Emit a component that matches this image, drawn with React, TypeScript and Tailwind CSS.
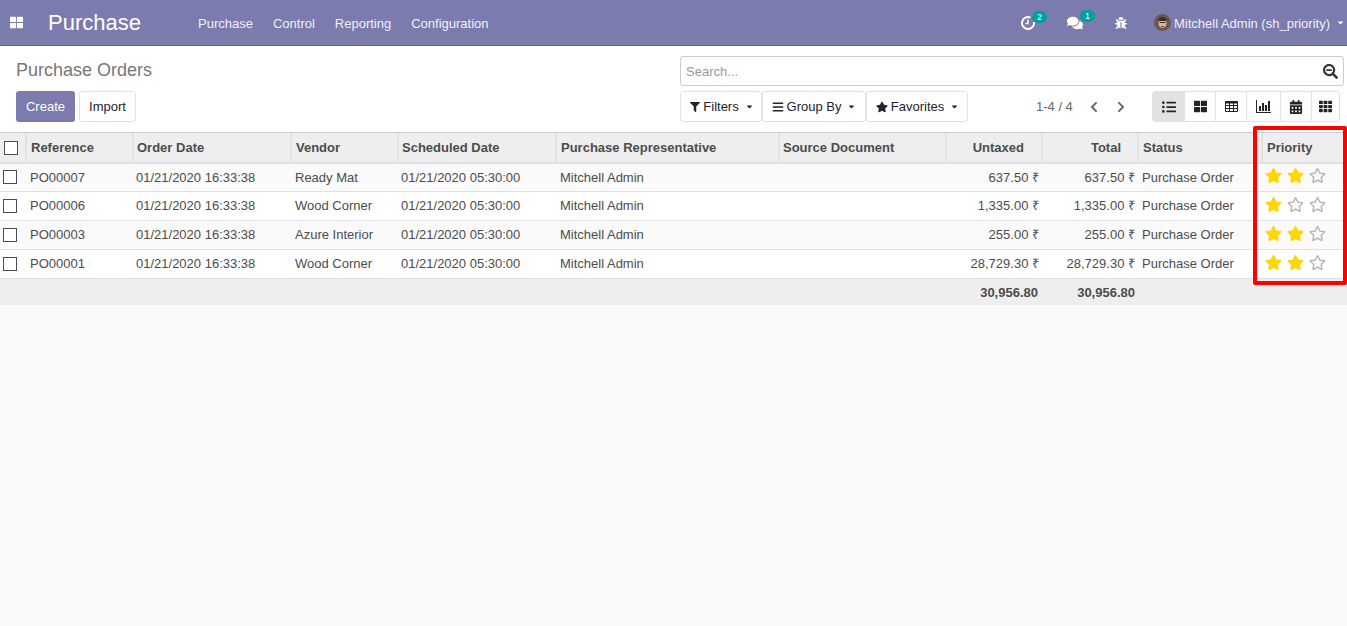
import { FaThLarge, FaComments, FaBug, FaFilter, FaBars, FaStar, FaRegStar, FaSearchMinus, FaListUl, FaTh, FaCalendarAlt, FaChevronLeft, FaChevronRight, FaCaretDown } from 'react-icons/fa';

const rows = [
    { ref: 'PO00007', vendor: 'Ready Mat', amount: '637.50', stars: 2 },
    { ref: 'PO00006', vendor: 'Wood Corner', amount: '1,335.00', stars: 1 },
    { ref: 'PO00003', vendor: 'Azure Interior', amount: '255.00', stars: 2 },
    { ref: 'PO00001', vendor: 'Wood Corner', amount: '28,729.30', stars: 2 },
];

const Clock = () => (
    <svg width="14" height="14" viewBox="0 0 14 14" fill="none" stroke="white" strokeWidth="2">
        <path d="M9.5 1.6A6 6 0 1 0 12.9 6" />
        <path d="M7 3.6V7.6H4.4" strokeWidth="1.5" />
    </svg>
);

const Chart = () => (
    <svg width="15" height="13" viewBox="0 0 15 13" fill="#222">
        <path d="M0 0h1v12h14v1H0z" />
        <rect x="3" y="6" width="2" height="5" />
        <rect x="6" y="3" width="2" height="8" />
        <rect x="9" y="5" width="2" height="6" />
        <rect x="12" y="1" width="2" height="10" />
    </svg>
);

const TableIcon = () => (
    <svg width="13" height="11" viewBox="0 0 13 11" fill="none" stroke="#222">
        <path d="M.5 .5h12v10H.5z" />
        <path d="M.5 1.5h12" strokeWidth="2" />
        <path d="M.5 4.5h12M.5 7.5h12M4.5 .5v10M8.5 .5v10" />
    </svg>
);

const Avatar = () => (
    <svg width="17" height="17" viewBox="0 0 17 17" className="rounded-full">
        <rect width="17" height="17" fill="#6b5a4a" />
        <ellipse cx="8.5" cy="9" rx="4" ry="5" fill="#d9b8a5" />
        <path d="M4 6c1-4 8-4 9 0l-1 1H5z" fill="#3d3028" />
        <rect x="5.5" y="8" width="6" height="1" fill="#333" />
        <path d="M7 12h3v1H7z" fill="#a33" />
    </svg>
);

const Stars = ({ n }: { n: number }) => (
    <div className="flex gap-[5px]">
        {[0, 1, 2].map((i) =>
            i < n ? (
                <FaStar key={i} size={17} className="text-[#ffd700]" />
            ) : (
                <FaRegStar key={i} size={17} className="text-[#b5b5b5]" />
            )
        )}
    </div>
);

const Checkbox = () => <div className="w-[14px] h-[14px] border border-[#4c4c4c] bg-white" />;

function App() {
    return (
        <div className="h-[626px] overflow-hidden bg-[#f9f9f9] text-[13px] text-[#4c4c4c] font-['Liberation_Sans',sans-serif] relative">
            <nav className="h-[46px] bg-[#7c7bad] border-b border-[#5f5e97] flex items-center text-white">
                <FaThLarge size={13} className="ml-[10px]" />
                <span className="ml-[25px] text-[22px] w-[150px]">Purchase</span>
                <div className="flex gap-5 text-[#f0f0f6] pt-[2px]">
                    <span>Purchase</span>
                    <span>Control</span>
                    <span>Reporting</span>
                    <span>Configuration</span>
                </div>
                <div className="ml-auto flex items-center">
                    <div className="flex items-center relative mr-[32px]">
                        <Clock />
                        <span className="absolute left-[11px] -top-[5px] w-[15px] h-[12px] rounded-full bg-[#00a09d] text-[9px] leading-[12px] text-center">2</span>
                    </div>
                    <div className="flex items-center relative mr-[32px]">
                        <FaComments size={16} />
                        <span className="absolute left-[13px] -top-[5px] w-[15px] h-[12px] rounded-full bg-[#00a09d] text-[9px] leading-[12px] text-center">1</span>
                    </div>
                    <FaBug size={12} className="mr-[27px]" />
                    <Avatar />
                    <span className="ml-[3px] text-[#f0f0f6] pt-[2px]">Mitchell Admin (sh_priority)</span>
                    <FaCaretDown size={9} className="ml-[6px] mr-[2px]" />
                </div>
            </nav>

            <div className="h-[87px] bg-white border-b border-[#cccccc] flex justify-between pl-[16px] pr-[3px]">
                <div>
                    <h1 className="mt-[13px] text-[18px] leading-[22px] text-[#777777]">Purchase Orders</h1>
                    <div className="mt-[10px] flex gap-[4px]">
                        <button className="w-[59px] h-[31px] bg-[#7c7bad] rounded-[3px] text-white">Create</button>
                        <button className="w-[57px] h-[31px] bg-white border border-[#dee2e6] rounded-[3px] text-[#212529]">Import</button>
                    </div>
                </div>
                <div className="w-[664px] pt-[10px]">
                    <div className="h-[30px] border border-[#cccccc] rounded-[3px] flex items-center justify-between pl-[5px] pr-[5px]">
                        <span className="text-[#999999] pt-[2px]">Search...</span>
                        <FaSearchMinus size={15} className="text-[#333333] mt-[1px]" />
                    </div>
                    <div className="mt-[5px] flex items-center">
                        <div className="flex text-[#212529]">
                            <button className="w-[82px] h-[31px] border border-[#dee2e6] rounded-[3px] flex items-center justify-center gap-[3px] pl-[2px]">
                                <FaFilter size={10} /> Filters <FaCaretDown size={9} className="ml-[3px]" />
                            </button>
                            <button className="w-[104px] h-[31px] border border-[#dee2e6] rounded-[3px] flex items-center justify-center gap-[3px]">
                                <FaBars size={12} /> Group By <FaCaretDown size={9} className="ml-[3px]" />
                            </button>
                            <button className="w-[102px] h-[31px] border border-[#dee2e6] rounded-[3px] flex items-center justify-center gap-[3px] pl-[1px]">
                                <FaStar size={12} /> Favorites <FaCaretDown size={9} className="ml-[3px]" />
                            </button>
                        </div>
                        <span className="ml-[68px] text-[#666666] whitespace-nowrap">1-4 / 4</span>
                        <FaChevronLeft size={12} className="ml-[15px] text-[#666666]" />
                        <FaChevronRight size={12} className="ml-[15px] text-[#666666]" />
                        <div className="ml-auto mr-[4px] flex h-[31px] border border-[#dee2e6] rounded-[3px] text-[#212529] [&>div]:flex [&>div]:items-center [&>div]:justify-center [&>div]:border-l [&>div]:border-[#dee2e6]">
                            <div className="w-[31px] !border-l-0 bg-[#e2e2e2]"><FaListUl size={14} /></div>
                            <div className="w-[31px]"><FaThLarge size={13} /></div>
                            <div className="w-[31px]"><TableIcon /></div>
                            <div className="w-[34px]"><Chart /></div>
                            <div className="w-[31px]"><FaCalendarAlt size={14} /></div>
                            <div className="w-[28px]"><FaTh size={13} /></div>
                        </div>
                    </div>
                </div>
            </div>

            <table className="w-[1347px] table-fixed border-collapse">
                <colgroup>
                    <col className="w-[26px]" />
                    <col className="w-[107px]" />
                    <col className="w-[158px]" />
                    <col className="w-[107px]" />
                    <col className="w-[158px]" />
                    <col className="w-[223px]" />
                    <col className="w-[167px]" />
                    <col className="w-[96px]" />
                    <col className="w-[96px]" />
                    <col className="w-[124px]" />
                    <col className="w-[85px]" />
                </colgroup>
                <thead>
                    <tr className="h-[30px] bg-[#eeeeee] border-b-[2px] border-[#dee2e6] [&>th]:border-[#e2e2e2] [&>th]:font-bold [&>th]:text-left">
                        <th className="pl-[4px]"><Checkbox /></th>
                        <th className="border-l-2 px-[4px]">Reference</th>
                        <th className="border-l-2 px-[3px]">Order Date</th>
                        <th className="border-l-2 px-[4px]">Vendor</th>
                        <th className="border-l-2 px-[3px]">Scheduled Date</th>
                        <th className="border-l-2 px-[4px]">Purchase Representative</th>
                        <th className="border-l-2 px-[3px]">Source Document</th>
                        <th className="border-l-2 pl-[4px] pr-[17px] !text-right">Untaxed</th>
                        <th className="border-l-2 pl-[4px] pr-[16px] !text-right">Total</th>
                        <th className="border-l-2 px-[4px]">Status</th>
                        <th className="border-l-2 pl-[4px]">Priority</th>
                    </tr>
                </thead>
                <tbody>
                    {rows.map((r, i) => (
                        <tr key={r.ref} className={`${i === 0 ? 'h-[28px]' : 'h-[29px]'} border-b border-[#dee2e6] ${i % 2 === 0 ? 'bg-[#fafafa]' : 'bg-white'}`}>
                            <td className="pl-[3px]"><Checkbox /></td>
                            <td className="px-[4px]">{r.ref}</td>
                            <td className="px-[3px]">01/21/2020 16:33:38</td>
                            <td className="px-[4px]">{r.vendor}</td>
                            <td className="px-[3px]">01/21/2020 05:30:00</td>
                            <td className="px-[4px]">Mitchell Admin</td>
                            <td className="px-[3px]"></td>
                            <td className="pl-[4px] pr-[3px] text-right">{r.amount} ₹</td>
                            <td className="pl-[4px] pr-[3px] text-right">{r.amount} ₹</td>
                            <td className="px-[4px]">Purchase Order</td>
                            <td className="pl-[3px] pb-[3px]"><Stars n={r.stars} /></td>
                        </tr>
                    ))}
                </tbody>
                <tfoot>
                    <tr className="h-[27px] bg-[#eeeeee] font-bold [&>td]:pt-[1px]">
                        <td colSpan={7}></td>
                        <td className="px-[3px] text-right pr-[4px]">30,956.80</td>
                        <td className="px-[3px] text-right">30,956.80</td>
                        <td colSpan={2}></td>
                    </tr>
                </tfoot>
            </table>

            <div className="absolute left-[1253px] top-[126px] w-[94px] h-[159px] border-[4px] border-[#ff0000] rounded-[2px]" />
        </div>
    );
}

export default App;
